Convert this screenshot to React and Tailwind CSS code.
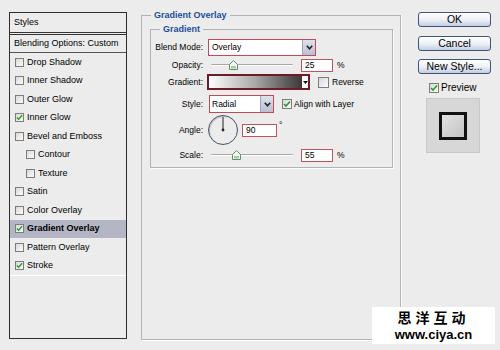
import React from "react";

const font = "font-[family-name:'Liberation_Sans',Arial,sans-serif]";

function Check({ checked, size = 9 }) {
  return (
    <div
      className="shrink-0 border border-[#7c7c7c] bg-gradient-to-br from-[#d9d9d9] to-[#fbfbfb] flex items-center justify-center"
      style={{ width: size, height: size }}
    >
      {checked && (
        <svg width={size - 2} height={size - 2} viewBox="0 0 8 8">
          <path d="M1 4 L3 6 L7 1.5" fill="none" stroke="#2a9a2a" strokeWidth="1.6" />
        </svg>
      )}
    </div>
  );
}

function StyleRow({ label, checked, indent, active }) {
  return (
    <div
      className={`h-[18.5px] flex items-center ${indent ? "pl-[16px]" : "pl-[5px]"} ${
        active ? "bg-[#b4b6c6] font-bold" : ""
      }`}
    >
      <Check checked={checked} />
      <span className="ml-[3px] text-[9px] leading-none whitespace-nowrap">{label}</span>
    </div>
  );
}

function Arrow({ w = 13 }) {
  return (
    <div
      className="h-full border-l border-[#9ea3b6] bg-gradient-to-b from-[#dfe2ee] to-[#b9bed2] flex items-center justify-center shrink-0"
      style={{ width: w }}
    >
      <svg width="7" height="5" viewBox="0 0 7 5">
        <path d="M0.8 0.8 L3.5 3.8 L6.2 0.8" fill="none" stroke="#222" strokeWidth="1.6" />
      </svg>
    </div>
  );
}

function Slider({ pos }) {
  return (
    <div className="relative w-[82px] h-[12px] shrink-0">
      <div className="absolute left-0 right-0 top-[5px] h-[2px] rounded-full bg-[#a8a8a8] border-b border-white" />
      <svg className="absolute top-[1px]" style={{ left: pos - 4 }} width="9" height="10" viewBox="0 0 9 10">
        <path d="M0.5 4.5 L4.5 0.6 L8.5 4.5 L8.5 9.5 L0.5 9.5 Z" fill="#f4f7f2" stroke="#5f8f6b" strokeWidth="1" />
        <rect x="2" y="6" width="5" height="2.5" fill="#9fd0a5" />
      </svg>
    </div>
  );
}

function Input({ value, w }) {
  return (
    <div
      className="h-[13px] border border-[#c0525f] bg-white flex items-center pl-[3px] text-[8.5px] leading-none shrink-0"
      style={{ width: w }}
    >
      {value}
    </div>
  );
}

function Label({ children }) {
  return (
    <div className="w-[52px] shrink-0 text-right text-[8.5px] leading-none whitespace-nowrap">{children}</div>
  );
}

function Btn({ children }) {
  return (
    <div className="w-[73px] h-[15px] rounded-[3px] border border-[#3d5579] bg-gradient-to-b from-[#ffffff] via-[#eef1f7] to-[#c3cde0] flex items-center justify-center text-[10.5px] leading-none">
      {children}
    </div>
  );
}

export default function App() {
  return (
    <div className={`relative w-[500px] h-[350px] bg-[#ececec] flex items-start text-black ${font}`}>
      {/* Left styles list */}
      <div className="ml-[9px] mt-[12px] w-[118px] h-[327px] border border-[#2e2e2e] flex flex-col">
        <div className="h-[22px] border-b-[3px] border-double border-[#333] flex items-center pl-[4px] text-[9px] leading-none">
          Styles
        </div>
        <div className="h-[18px] border-b border-[#555] flex items-center pl-[4px] text-[9px] leading-none whitespace-nowrap">
          Blending Options: Custom
        </div>
        <StyleRow label="Drop Shadow" />
        <StyleRow label="Inner Shadow" />
        <StyleRow label="Outer Glow" />
        <StyleRow label="Inner Glow" checked />
        <StyleRow label="Bevel and Emboss" />
        <StyleRow label="Contour" indent />
        <StyleRow label="Texture" indent />
        <StyleRow label="Satin" />
        <StyleRow label="Color Overlay" />
        <StyleRow label="Gradient Overlay" checked active />
        <StyleRow label="Pattern Overlay" />
        <StyleRow label="Stroke" checked />
        <div className="border-b border-white" />
      </div>

      {/* Middle panel */}
      <fieldset className="ml-[14px] mt-[9px] w-[260px] h-[331px] border border-[#b2b2b2] pl-[8px] pr-[7px] shadow-[1px_1px_0_#fff]">
        <legend className="ml-[1px] px-[3px] text-[9px] leading-[12px] font-bold text-[#1d4c9c]">Gradient Overlay</legend>
        <fieldset className="mt-[2px] w-[243px] border border-[#b2b2b2] pb-[5px] shadow-[1px_1px_0_#fff]">
          <legend className="ml-[9px] px-[3px] text-[9px] leading-[12px] font-bold text-[#1d4c9c]">Gradient</legend>

          <div className="mt-[4px] h-[17px] flex items-center">
            <Label>Blend Mode:</Label>
            <div className="ml-[5px] w-[108px] h-[17px] border border-[#c04a58] bg-white flex items-center">
              <span className="flex-1 pl-[3px] text-[8.5px] leading-none">Overlay</span>
              <Arrow />
            </div>
          </div>

          <div className="mt-[2px] h-[14px] flex items-center">
            <Label>Opacity:</Label>
            <div className="ml-[8px]">
              <Slider pos={22} />
            </div>
            <div className="ml-[8px]">
              <Input value="25" w={32} />
            </div>
            <span className="ml-[4px] text-[8.5px] leading-none">%</span>
          </div>

          <div className="mt-[2px] h-[16px] flex items-center">
            <Label>Gradient:</Label>
            <div className="ml-[4px] w-[103px] h-[16px] border-2 border-[#6e1b25] flex">
              <div className="flex-1 bg-gradient-to-r from-[#ffffff] via-[#a9a9a9] to-[#3c3c3c]" />
              <div className="w-[7px] border-l border-[#6e1b25] bg-white flex items-center justify-center">
                <svg width="5" height="3" viewBox="0 0 5 3">
                  <path d="M0 0 L5 0 L2.5 3 Z" fill="#111" />
                </svg>
              </div>
            </div>
            <div className="ml-[8px]">
              <Check size={11} />
            </div>
            <span className="ml-[3px] text-[8.5px] leading-none">Reverse</span>
          </div>

          <div className="mt-[5px] h-[18px] flex items-center">
            <Label>Style:</Label>
            <div className="ml-[6px] w-[65px] h-[18px] border border-[#c04a58] bg-white flex items-center">
              <span className="flex-1 pl-[2px] text-[8.5px] leading-none">Radial</span>
              <Arrow w={13} />
            </div>
            <div className="ml-[8px]">
              <Check checked size={10} />
            </div>
            <span className="ml-[2px] text-[8.5px] leading-none whitespace-nowrap">Align with Layer</span>
          </div>

          <div className="mt-[2px] h-[30px] flex items-center">
            <Label>Angle:</Label>
            <div className="ml-[5px] w-[30px] h-[30px] rounded-full border border-[#44546f] shadow-[inset_1px_1px_1px_#bbb] flex items-center justify-center">
              <svg width="28" height="28" viewBox="0 0 28 28">
                <line x1="14" y1="14" x2="14" y2="1" stroke="#222" strokeWidth="1" />
                <circle cx="14" cy="14" r="1.4" fill="#222" />
              </svg>
            </div>
            <div className="ml-[4px]">
              <Input value="90" w={35} />
            </div>
            <span className="ml-[2px] self-start mt-[6px] text-[8.5px] leading-none">°</span>
          </div>

          <div className="mt-[3px] h-[14px] flex items-center">
            <Label>Scale:</Label>
            <div className="ml-[8px]">
              <Slider pos={25} />
            </div>
            <div className="ml-[8px]">
              <Input value="55" w={32} />
            </div>
            <span className="ml-[4px] text-[8.5px] leading-none">%</span>
          </div>
        </fieldset>
      </fieldset>

      {/* Right column */}
      <div className="ml-[17px] mt-[12px] w-[73px] flex flex-col">
        <Btn>OK</Btn>
        <div className="mt-[9px]">
          <Btn>Cancel</Btn>
        </div>
        <div className="mt-[8px]">
          <Btn>New Style...</Btn>
        </div>
        <div className="mt-[9px] ml-[11px] h-[10px] flex items-center">
          <Check checked size={10} />
          <span className="ml-[2px] text-[10px] leading-none">Preview</span>
        </div>
        <div className="mt-[5px] ml-[8px] w-[54px] h-[55px] bg-[#d7d7d7] border border-[#c9c9c9] flex items-center justify-center">
          <div className="w-[28px] h-[28px] border-[3px] border-[#111] bg-gradient-to-br from-[#e2e2e2] to-[#c4c4c4]" />
        </div>
      </div>

      {/* Watermark */}
      <div className="absolute left-[372px] top-[307px] w-[123px] h-[37px] bg-white flex flex-col items-center justify-center gap-[3px]">
        <div className="h-[15px] flex items-center text-[14px] leading-[15px] font-bold tracking-[4px] font-[family-name:'Noto_Sans_CJK_SC',sans-serif]">
          思洋互动
        </div>
        <div className="h-[13px] flex items-center text-[13px] leading-[13px] font-bold">www.ciya.cn</div>
      </div>
    </div>
  );
}
